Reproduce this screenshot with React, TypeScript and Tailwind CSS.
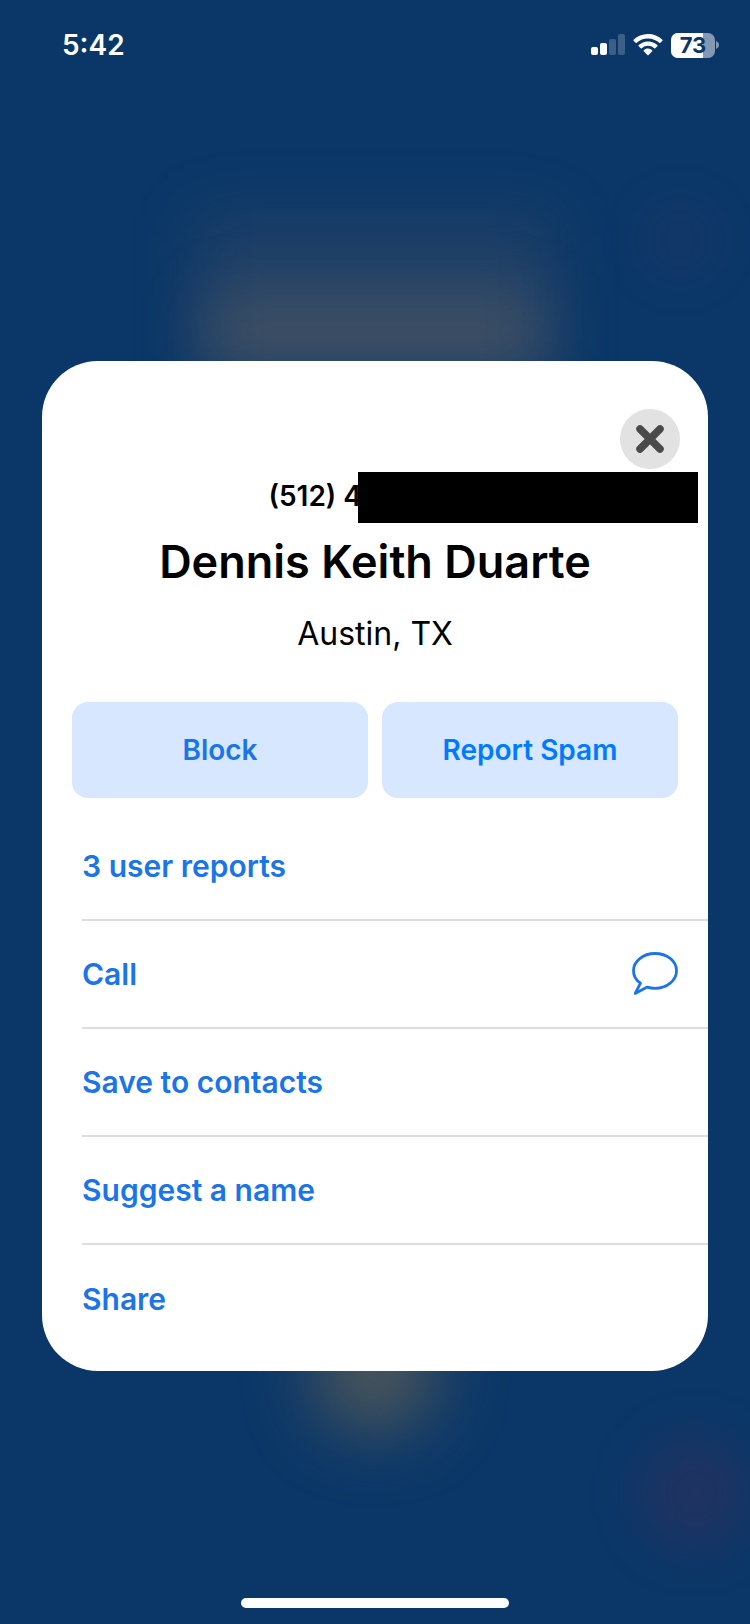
import type { ReactNode } from "react";

function SignalIcon() {
  return (
    <svg width="34" height="22" viewBox="0 0 34 22" fill="#fff" aria-hidden="true">
      <rect x="0" y="13" width="7" height="8" rx="2" />
      <rect x="9" y="9" width="7" height="12" rx="2" />
      <rect x="18" y="5" width="7" height="16" rx="2" opacity="0.2" />
      <rect x="27" y="0" width="7" height="21" rx="2" opacity="0.2" />
    </svg>
  );
}

function WifiIcon() {
  return (
    <svg width="30" height="22" viewBox="0 0 30 22" fill="#fff" aria-hidden="true">
      <path d="M15 0C9.400 0 4.300 2.200.6 5.700a.8.8 0 0 0 0 1.100l2 2a.8.8 0 0 0 1.100 0A16.300 16.300 0 0 1 15 4.400c4.400 0 8.300 1.700 11.300 4.400a.8.8 0 0 0 1.100 0l2-2a.8.8 0 0 0 0-1.100A20.900 20.900 0 0 0 15 0Z" />
      <path d="M15 7.400c-3.600 0-6.900 1.400-9.300 3.700a.8.8 0 0 0 0 1.100l2 2a.8.8 0 0 0 1.100 0A9 9 0 0 1 15 11.800a9 9 0 0 1 6.200 2.400.8.8 0 0 0 1.100 0l2-2a.8.8 0 0 0 0-1.100A13.500 13.500 0 0 0 15 7.400Z" />
      <path d="M15 14.600c-1.600 0-3.100.6-4.200 1.600a.8.8 0 0 0 0 1.100l3.600 3.600a.8.8 0 0 0 1.200 0l3.600-3.600a.8.8 0 0 0 0-1.100 6.200 6.200 0 0 0-4.200-1.600Z" />
    </svg>
  );
}

function Battery({ level }: { level: number }) {
  return (
    <div className="flex items-center gap-px">
      <div className="relative flex h-[25px] w-11 items-center justify-center overflow-hidden rounded-[7px] bg-[#8598b3]">
        <div className="absolute inset-y-0 left-0 bg-white" style={{ width: `${level}%` }} />
        <span className="relative text-[22px] leading-6 font-bold text-[#0b3768]">{level}</span>
      </div>
      <svg width="3" height="8" viewBox="0 0 3 8" aria-hidden="true">
        <path d="M0 0C2 .8 3 2.300 3 4S2 7.200 0 8Z" fill="#8598b3" />
      </svg>
    </div>
  );
}

function CloseIcon() {
  return (
    <svg width="28" height="28" viewBox="0 0 28 28" aria-hidden="true">
      <path d="M4 4 24 24M24 4 4 24" stroke="#4a4a4a" strokeWidth="7.500" strokeLinecap="round" />
    </svg>
  );
}

function BubbleIcon() {
  return (
    <svg width="46" height="44" viewBox="0 0 46 44" fill="none" aria-hidden="true">
      <path
        d="M23 1.500C11 1.500 1.500 9.200 1.500 18.700c0 5.100 2.700 9.600 7 12.500L3.200 41.400 15.200 35.100c2.400.8 5 1.200 7.800 1.200 12 0 21.500-7.900 21.500-17.600S35 1.500 23 1.500Z"
        stroke="#1b75e8"
        strokeWidth="2.800"
        strokeLinejoin="round"
      />
    </svg>
  );
}

// Blurred remains of the screen underneath the dialog
function Backdrop() {
  return (
    <div className="absolute inset-0 overflow-hidden" aria-hidden="true">
      <div className="absolute top-[215px] left-1/2 h-[160px] w-[360px] -translate-x-1/2 bg-[#8a7060]/16 blur-[32px]" />
      <div className="absolute top-[296px] left-1/2 h-[76px] w-[340px] -translate-x-1/2 bg-[#9a7a5c]/28 blur-[30px]" />
      <div className="absolute top-[200px] right-[30px] h-20 w-20 rounded-full bg-[#4a3a6a]/12 blur-[20px]" />
      <div className="absolute bottom-[194px] left-1/2 h-[120px] w-[120px] -translate-x-1/2 rounded-full bg-[#a08048]/48 blur-[36px]" />
      <div className="absolute right-0 bottom-[76px] h-[110px] w-[110px] rounded-full bg-[#4a2a55]/32 blur-[24px]" />
    </div>
  );
}

function Row({ label, children }: { label: string; children?: ReactNode }) {
  return (
    <li className="flex h-[108px] items-center justify-between border-b-2 border-[#dedede] pr-[30px] last:border-b-0">
      <button className="text-[30px] leading-10 font-semibold text-[#1b75e8]">{label}</button>
      {children}
    </li>
  );
}

export default function App() {
  return (
    <div className="relative flex min-h-screen flex-col bg-[#0b3768] font-['Inter',sans-serif]">
      <Backdrop />

      <header className="relative flex h-[90px] items-center justify-between pr-[31px] pl-[62px]">
        <time className="text-[28px] leading-8 font-semibold text-white">5:42</time>
        <div className="flex items-center gap-2">
          <SignalIcon />
          <WifiIcon />
          <Battery level={73} />
        </div>
      </header>

      <main className="relative mx-[42px] mt-[271px] rounded-[56px] bg-white pt-12 pb-[18px]">
        <div className="flex justify-end pr-7">
          <button
            aria-label="Close"
            className="flex h-[60px] w-[60px] items-center justify-center rounded-full bg-[#e2e2e2]"
          >
            <CloseIcon />
          </button>
        </div>

        <div className="mt-[3px] flex items-center pr-2.5">
          <span className="-mr-1 flex-1 pb-1 text-right text-[28px] leading-8 font-semibold text-black">
            (512) 4
          </span>
          <div className="relative h-[51px] w-[340px] bg-black" />
        </div>

        <h1 className="mt-[11px] text-center text-[45px] leading-[56px] font-semibold text-black">
          Dennis Keith Duarte
        </h1>
        <p className="mt-6 text-center text-[32px] leading-10 text-black">Austin, TX</p>

        <div className="mt-12 grid grid-cols-2 gap-3.5 px-[30px]">
          <button className="h-24 rounded-2xl bg-[#d6e7ff] text-[28px] font-semibold text-[#1b75e8]">
            Block
          </button>
          <button className="h-24 rounded-2xl bg-[#d6e7ff] text-[28px] font-semibold text-[#007aff]">
            Report Spam
          </button>
        </div>

        <ul className="mt-[15px] pl-10">
          <Row label="3 user reports" />
          <Row label="Call">
            <button aria-label="Send message">
              <BubbleIcon />
            </button>
          </Row>
          <Row label="Save to contacts" />
          <Row label="Suggest a name" />
          <Row label="Share" />
        </ul>
      </main>

      <div className="relative mx-auto mt-auto mb-4 h-2.5 w-[268px] rounded-full bg-white" />
    </div>
  );
}
